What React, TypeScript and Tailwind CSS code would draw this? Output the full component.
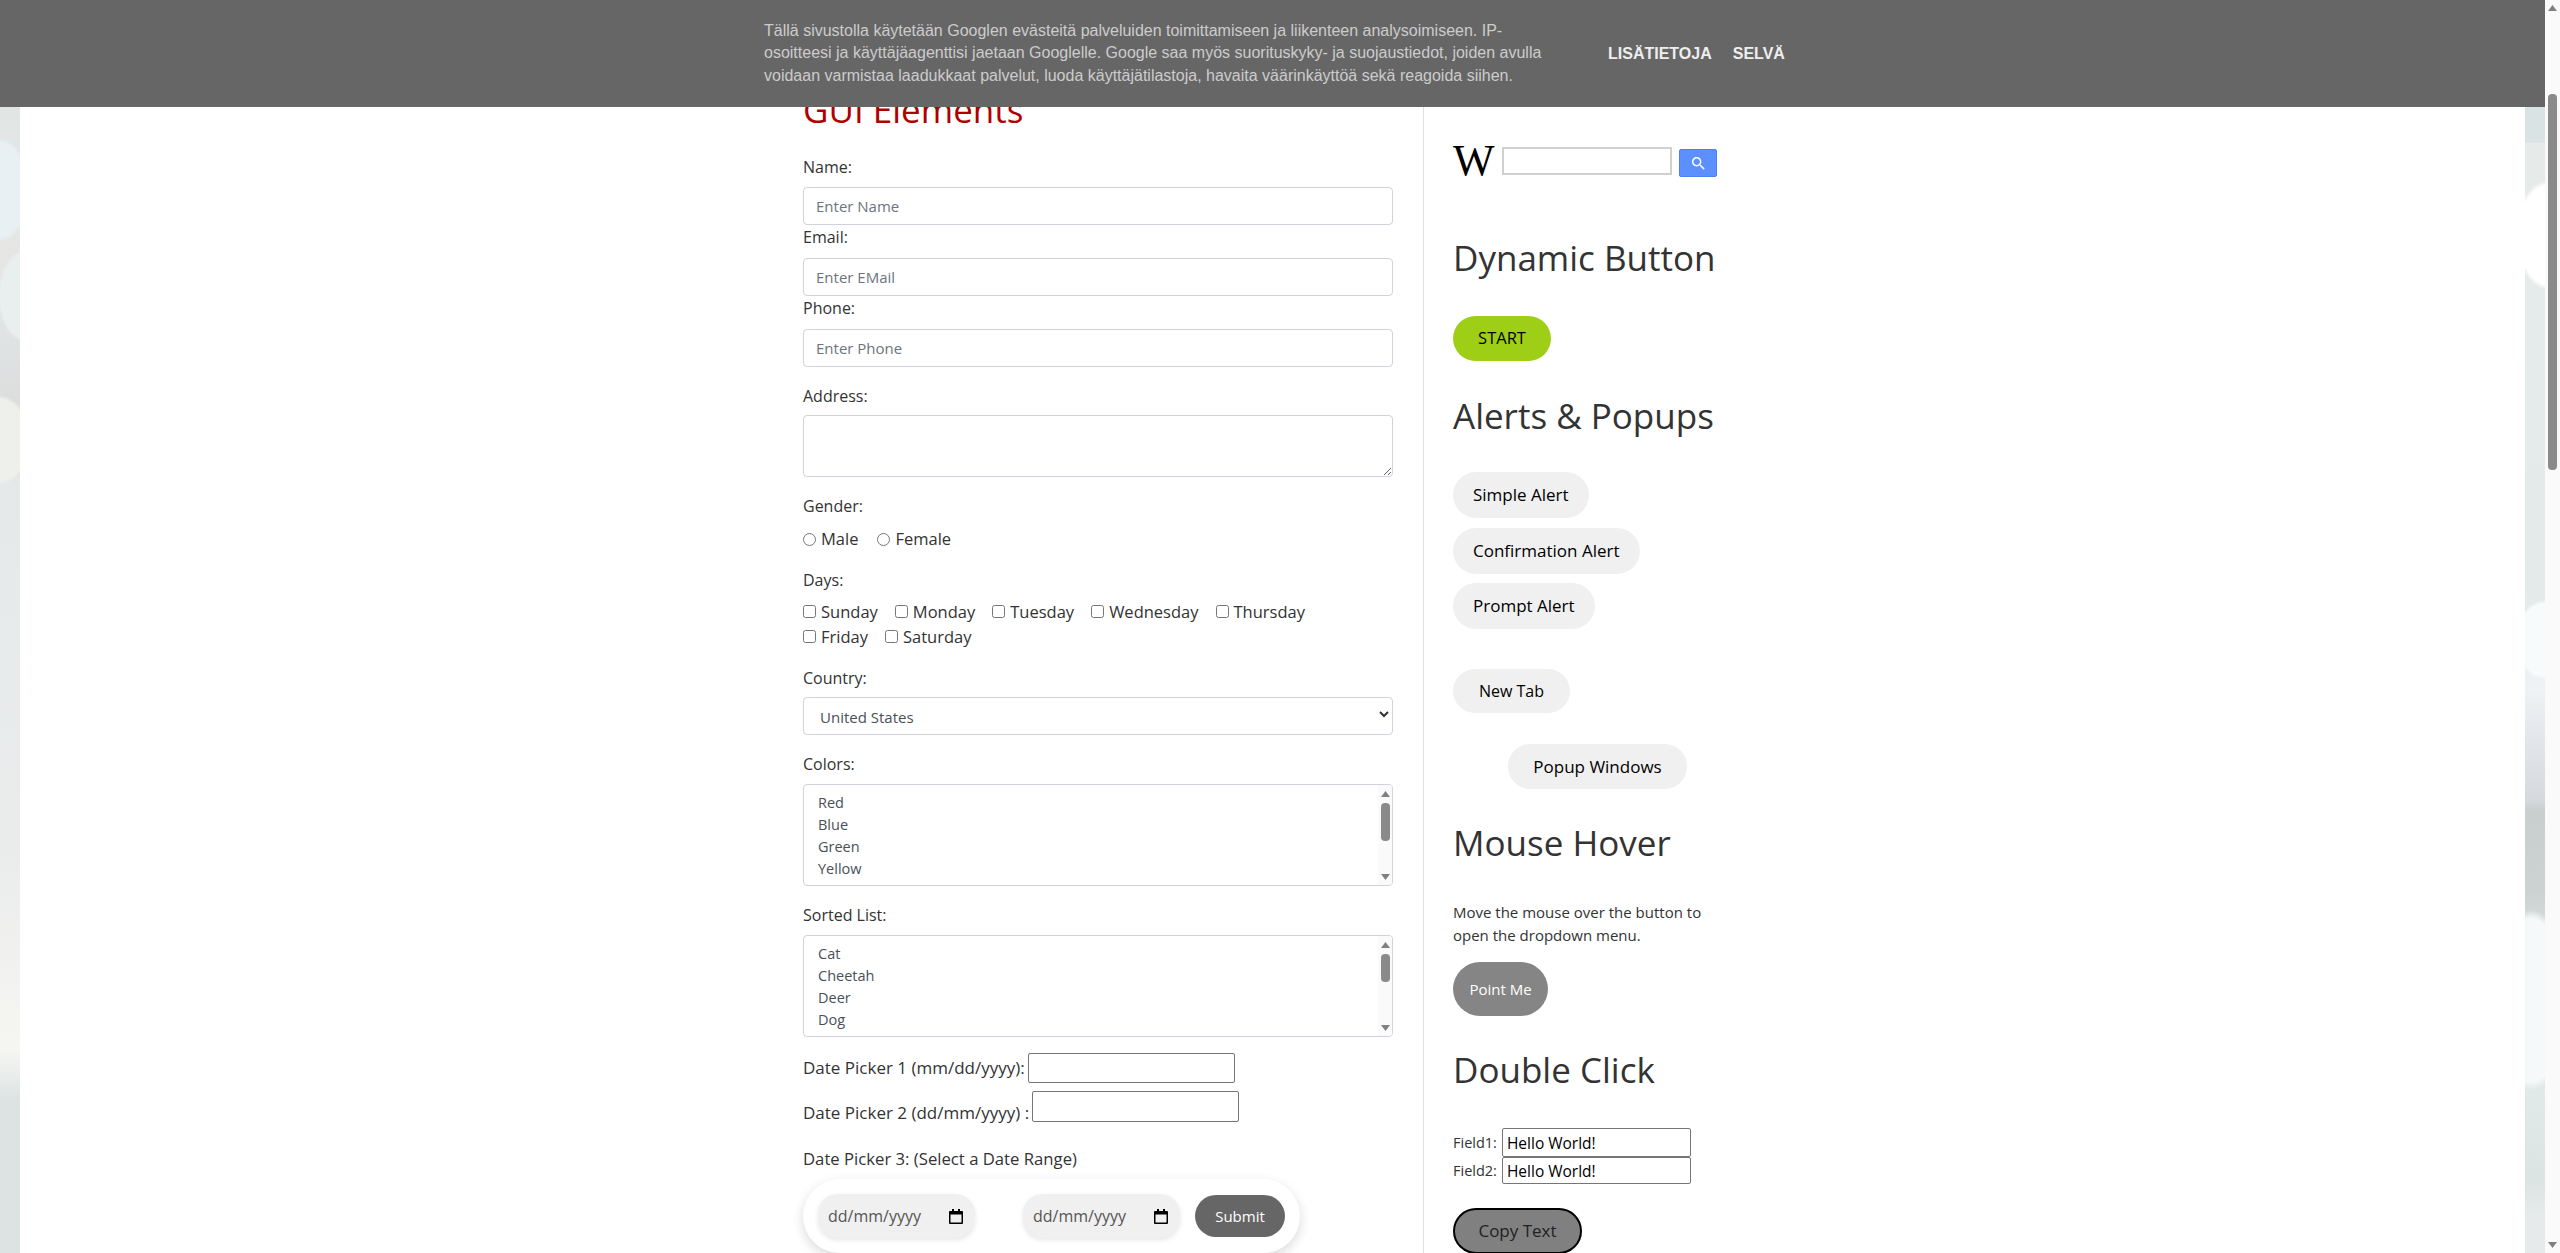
import React from "react";

const days = ["Sunday", "Monday", "Tuesday", "Wednesday", "Thursday", "Friday", "Saturday"];
const colors = ["Red", "Blue", "Green", "Yellow", "Red"];
const animals = ["Cat", "Cheetah", "Deer", "Dog", "Elephant"];

const sideHeading = "h-10 text-[35px] leading-10 font-normal text-[#333]";
const grayButton = "block h-[46px] rounded-[23px] bg-[#f0f0f0] px-5 text-[17px] text-black";
const formControl =
  "block h-[38px] w-full rounded border border-[#ced4da] bg-white px-3 text-[15px] text-[#495057] placeholder:text-[#6c757d]";

// scrollbar arrows are shared by the page and the list boxes
const Arrow = ({ down = false }: { down?: boolean }) => (
  <svg width="9" height="6" viewBox="0 0 9 6" className="fill-[#808080]">
    <path d={down ? "M0 0h9L4.5 6z" : "M0 6h9L4.5 0z"} />
  </svg>
);

const ListBox = ({ items, thumb }: { items: string[]; thumb: string }) => (
  <div className="relative h-[102px] overflow-hidden rounded border border-[#ced4da] bg-white pl-[14px] pt-[7px] text-[14.5px] leading-[22px] text-[#495057]">
    {items.map((item, i) => (
      <div key={i}>{item}</div>
    ))}
    <div className="absolute inset-y-0 right-0 flex w-[14px] flex-col items-center bg-[#fafafa] pt-[6px]">
      <Arrow />
      <div className={`mt-[6px] w-[9px] rounded bg-[#8a8a8a] ${thumb}`} />
      <div className="absolute bottom-[5px]">
        <Arrow down />
      </div>
    </div>
  </div>
);

const DateField = () => (
  <div className="flex h-11 w-[157px] items-center justify-between rounded-[20px] bg-[#f0f0f0] pl-[10px] pr-3 text-base text-[#555] shadow-[0_2px_5px_rgba(0,0,0,0.1)]">
    <span>dd/mm/yyyy</span>
    <svg width="14" height="15" viewBox="0 0 14 15" className="fill-black">
      <path d="M3 0h2v2h4V0h2v2h2a1 1 0 0 1 1 1v11a1 1 0 0 1-1 1H1a1 1 0 0 1-1-1V3a1 1 0 0 1 1-1h2zM1.5 5.5v8h11v-8z" />
    </svg>
  </div>
);

export default function App() {
  return (
    <div className="flex h-[1253px] overflow-hidden font-['Open_Sans',sans-serif] text-base text-[#333]">
      <div className="relative flex min-w-0 flex-1">
        {/* blurred page background */}
        <div className="w-5 shrink-0 bg-[radial-gradient(ellipse_30px_52px_at_0px_190px,#e8f0f3_90%,transparent),radial-gradient(ellipse_26px_46px_at_24px_296px,#e9eeee_90%,transparent),radial-gradient(ellipse_30px_45px_at_0px_440px,#eef0ec_90%,transparent),linear-gradient(180deg,#dce3e3_0,#e4e7e5_180px,#e6e6e4_300px,#e1e4e6_320px,#dcdedd_400px,#e6e9ea_490px,#eaecec_850px,#f6f6f2_1050px,#dde3e3_1100px)]" />

        <div className="flex min-w-0 flex-1 bg-white pl-[783px]">
          <main className="w-[590px] shrink-0 pt-[90px]">
            <h2 className="h-10 text-[35px] leading-10 font-normal text-[#b00000]">GUI Elements</h2>

            <label className="mt-6 mb-2 block h-[25px] pt-px">Name:</label>
            <input className={formControl} placeholder="Enter Name" />
            <label className="mb-2 block h-[25px]">Email:</label>
            <input className={formControl} placeholder="Enter EMail" />
            <label className="mb-2 block h-[25px]">Phone:</label>
            <input className={formControl} placeholder="Enter Phone" />

            <label className="mt-[17px] mb-[6px] block h-[25px]">Address:</label>
            <textarea className="block h-[62px] w-full rounded border border-[#ced4da]" />

            <div className="mt-[17px] h-6">Gender:</div>
            <div className="mt-[9px] flex h-6 items-center gap-[19px] text-[16.5px]">
              <label className="flex items-center gap-[5px]">
                <input type="radio" name="gender" />
                Male
              </label>
              <label className="flex items-center gap-[5px]">
                <input type="radio" name="gender" />
                Female
              </label>
            </div>

            <div className="mt-[17px] h-6">Days:</div>
            <div className="mt-[7px] flex w-[530px] flex-wrap gap-x-[17px] text-[16.5px] leading-[25px]">
              {days.map((day) => (
                <label key={day} className="flex items-center gap-[5px]">
                  <input type="checkbox" />
                  {day}
                </label>
              ))}
            </div>

            <div className="mt-[17px] h-6">Country:</div>
            <div className="relative mt-[7px] flex h-[38px] items-center rounded border border-[#ced4da] pl-4 pt-[2px] text-[15px] text-[#495057]">
              United States
              <svg width="10" height="7" viewBox="0 0 10 7" className="absolute right-[3px] top-[13px] fill-none stroke-[#333] stroke-2">
                <path d="M1 1l4 4 4-4" />
              </svg>
            </div>

            <div className="mt-[17px] h-6">Colors:</div>
            <div className="mt-2">
              <ListBox items={colors} thumb="h-[38px]" />
            </div>

            <div className="mt-[17px] h-6">Sorted List:</div>
            <div className="mt-2">
              <ListBox items={animals} thumb="h-7" />
            </div>

            <div className="mt-4 flex h-[30px] items-center gap-[3px] text-[17px]">
              Date Picker 1 (mm/dd/yyyy):
              <input className="h-[30px] w-[207px] rounded-[2px] border border-[#767676]" />
            </div>
            <div className="mt-[8px] flex h-[31px] items-start gap-[3px] text-[17px]">
              <span className="mt-[9px]">Date Picker 2 (dd/mm/yyyy) :</span>
              <input className="h-[31px] w-[207px] rounded-[2px] border border-[#767676]" />
            </div>

            <div className="mt-6 h-6 text-[16.7px]">Date Picker 3: (Select a Date Range)</div>
            <div className="mt-[9px] flex h-[74px] w-[497px] items-center rounded-[37px] bg-white pl-[15px] shadow-[0_4px_12px_rgba(0,0,0,0.15)]">
              <DateField />
              <div className="ml-[48px]">
                <DateField />
              </div>
              <button className="ml-[15px] h-[42px] w-[90px] rounded-[21px] bg-[#666] text-[15px] font-medium text-white">
                Submit
              </button>
            </div>
          </main>

          <aside className="ml-[30px] w-[320px] shrink-0 border-l border-[#e0e0e0] pl-[29px] pt-[147px]">
            <div className="flex h-[30px] items-start">
              <span className="h-7 w-[43px] font-['Liberation_Serif',serif] text-[44px] leading-7 text-black">W</span>
              <input className="ml-[6px] h-7 w-[170px] border-2 border-[#d0d0d0]" />
              <button className="ml-[7px] mt-[2px] flex h-7 w-[38px] items-center justify-center rounded-[2px] border border-[#4d7fee] bg-[#5c8fff]">
                <svg width="13" height="13" viewBox="0 0 18 18" className="fill-white">
                  <path d="M12.5 11h-.79l-.28-.27C12.41 9.59 13 8.11 13 6.5 13 2.91 10.09 0 6.5 0S0 2.91 0 6.5 2.91 13 6.5 13c1.61 0 3.09-.59 4.23-1.57l.27.28v.79l5 4.99L17.49 16l-4.99-5zm-6 0C4.01 11 2 8.99 2 6.5S4.01 2 6.5 2 11 4.01 11 6.5 8.99 11 6.5 11z" />
                </svg>
              </button>
            </div>

            <h2 className={`mt-[61px] ${sideHeading}`}>Dynamic Button</h2>
            <button className="mt-[38px] block h-[45px] w-[98px] rounded-[23px] bg-[#9fce17] text-[16.5px] text-black">
              START
            </button>

            <h2 className={`mt-[35px] ${sideHeading}`}>Alerts &amp; Popups</h2>
            <button className={`mt-9 ${grayButton}`}>Simple Alert</button>
            <button className={`mt-[10px] ${grayButton}`}>Confirmation Alert</button>
            <button className={`mt-[9px] ${grayButton}`}>Prompt Alert</button>
            <button className="mt-10 block h-[44px] w-[117px] rounded-[22px] bg-[#f0f0f0] text-base text-black">New Tab</button>
            <button className="ml-[55px] mt-[31px] block h-[45px] w-[179px] rounded-[22px] bg-[#f0f0f0] text-[17px] text-black">
              Popup Windows
            </button>

            <h2 className={`mt-[34px] ${sideHeading}`}>Mouse Hover</h2>
            <p className="mt-[38px] w-[260px] text-[15px] leading-[23px]">
              Move the mouse over the button to open the dropdown menu.
            </p>
            <button className="mt-[15px] block h-[54px] w-[95px] rounded-[27px] bg-[#858585] text-[15px] text-white">Point Me</button>

            <h2 className={`mt-[34px] ${sideHeading}`}>Double Click</h2>
            <div className="mt-[38px] flex h-[29px] items-center text-[14.5px]">
              Field1:
              <input readOnly value="Hello World!" className="ml-[5px] h-[29px] w-[189px] rounded-[2px] border border-[#767676] px-1 text-[15.5px] text-black" />
            </div>
            <div className="flex h-[27px] items-center text-[14.5px]">
              Field2:
              <input readOnly value="Hello World!" className="ml-[5px] h-[27px] w-[189px] rounded-[2px] border border-[#767676] px-1 text-[15.5px] text-black" />
            </div>
            <button className="mt-6 block h-[46px] w-[129px] rounded-[23px] border-2 border-black bg-[#808080] text-[17px] text-[#222]">
              Copy Text
            </button>
          </aside>
        </div>

        <div className="w-5 shrink-0 bg-[radial-gradient(ellipse_34px_55px_at_24px_235px,#ffffff_90%,transparent),radial-gradient(ellipse_30px_40px_at_20px_640px,#f8fbfb_90%,transparent),radial-gradient(ellipse_40px_90px_at_6px_1000px,#f5f9fa_90%,transparent),linear-gradient(180deg,#d9e3e3_0,#d9e3e3_142px,#e6ebea_143px,#e4e9ea_590px,#eef2f5_690px,#d5d9dd_800px,#c9cfcf_810px,#ccd2d2_890px,#e8eeee_1000px,#dbe3e3_1180px,#e6eaea_1215px)]" />

        {/* cookie notice sits over the page */}
        <div className="absolute inset-x-0 top-0 flex h-[107px] items-center bg-[#666] pl-[764px] font-['Liberation_Sans',sans-serif] text-base text-[#ccc]">
          <p className="w-[790px] leading-[22.4px]">
            Tällä sivustolla käytetään Googlen evästeitä palveluiden toimittamiseen ja liikenteen analysoimiseen. IP-osoitteesi ja käyttäjäagenttisi jaetaan Googlelle. Google saa myös suorituskyky- ja suojaustiedot, joiden avulla voidaan varmistaa laadukkaat palvelut, luoda käyttäjätilastoja, havaita väärinkäyttöä sekä reagoida siihen.
          </p>
          <a className="ml-[54px] font-bold text-[#eee]">LISÄTIETOJA</a>
          <a className="ml-[21px] font-bold text-[#eee]">SELVÄ</a>
        </div>
      </div>

      {/* page scrollbar */}
      <div className="relative flex w-[15px] shrink-0 flex-col items-center bg-[#fafafa] pt-[5px]">
        <Arrow />
        <div className="mt-[83px] h-[376px] w-[9px] rounded bg-[#8a8a8a]" />
        <div className="absolute bottom-[5px]">
          <Arrow down />
        </div>
      </div>
    </div>
  );
}
